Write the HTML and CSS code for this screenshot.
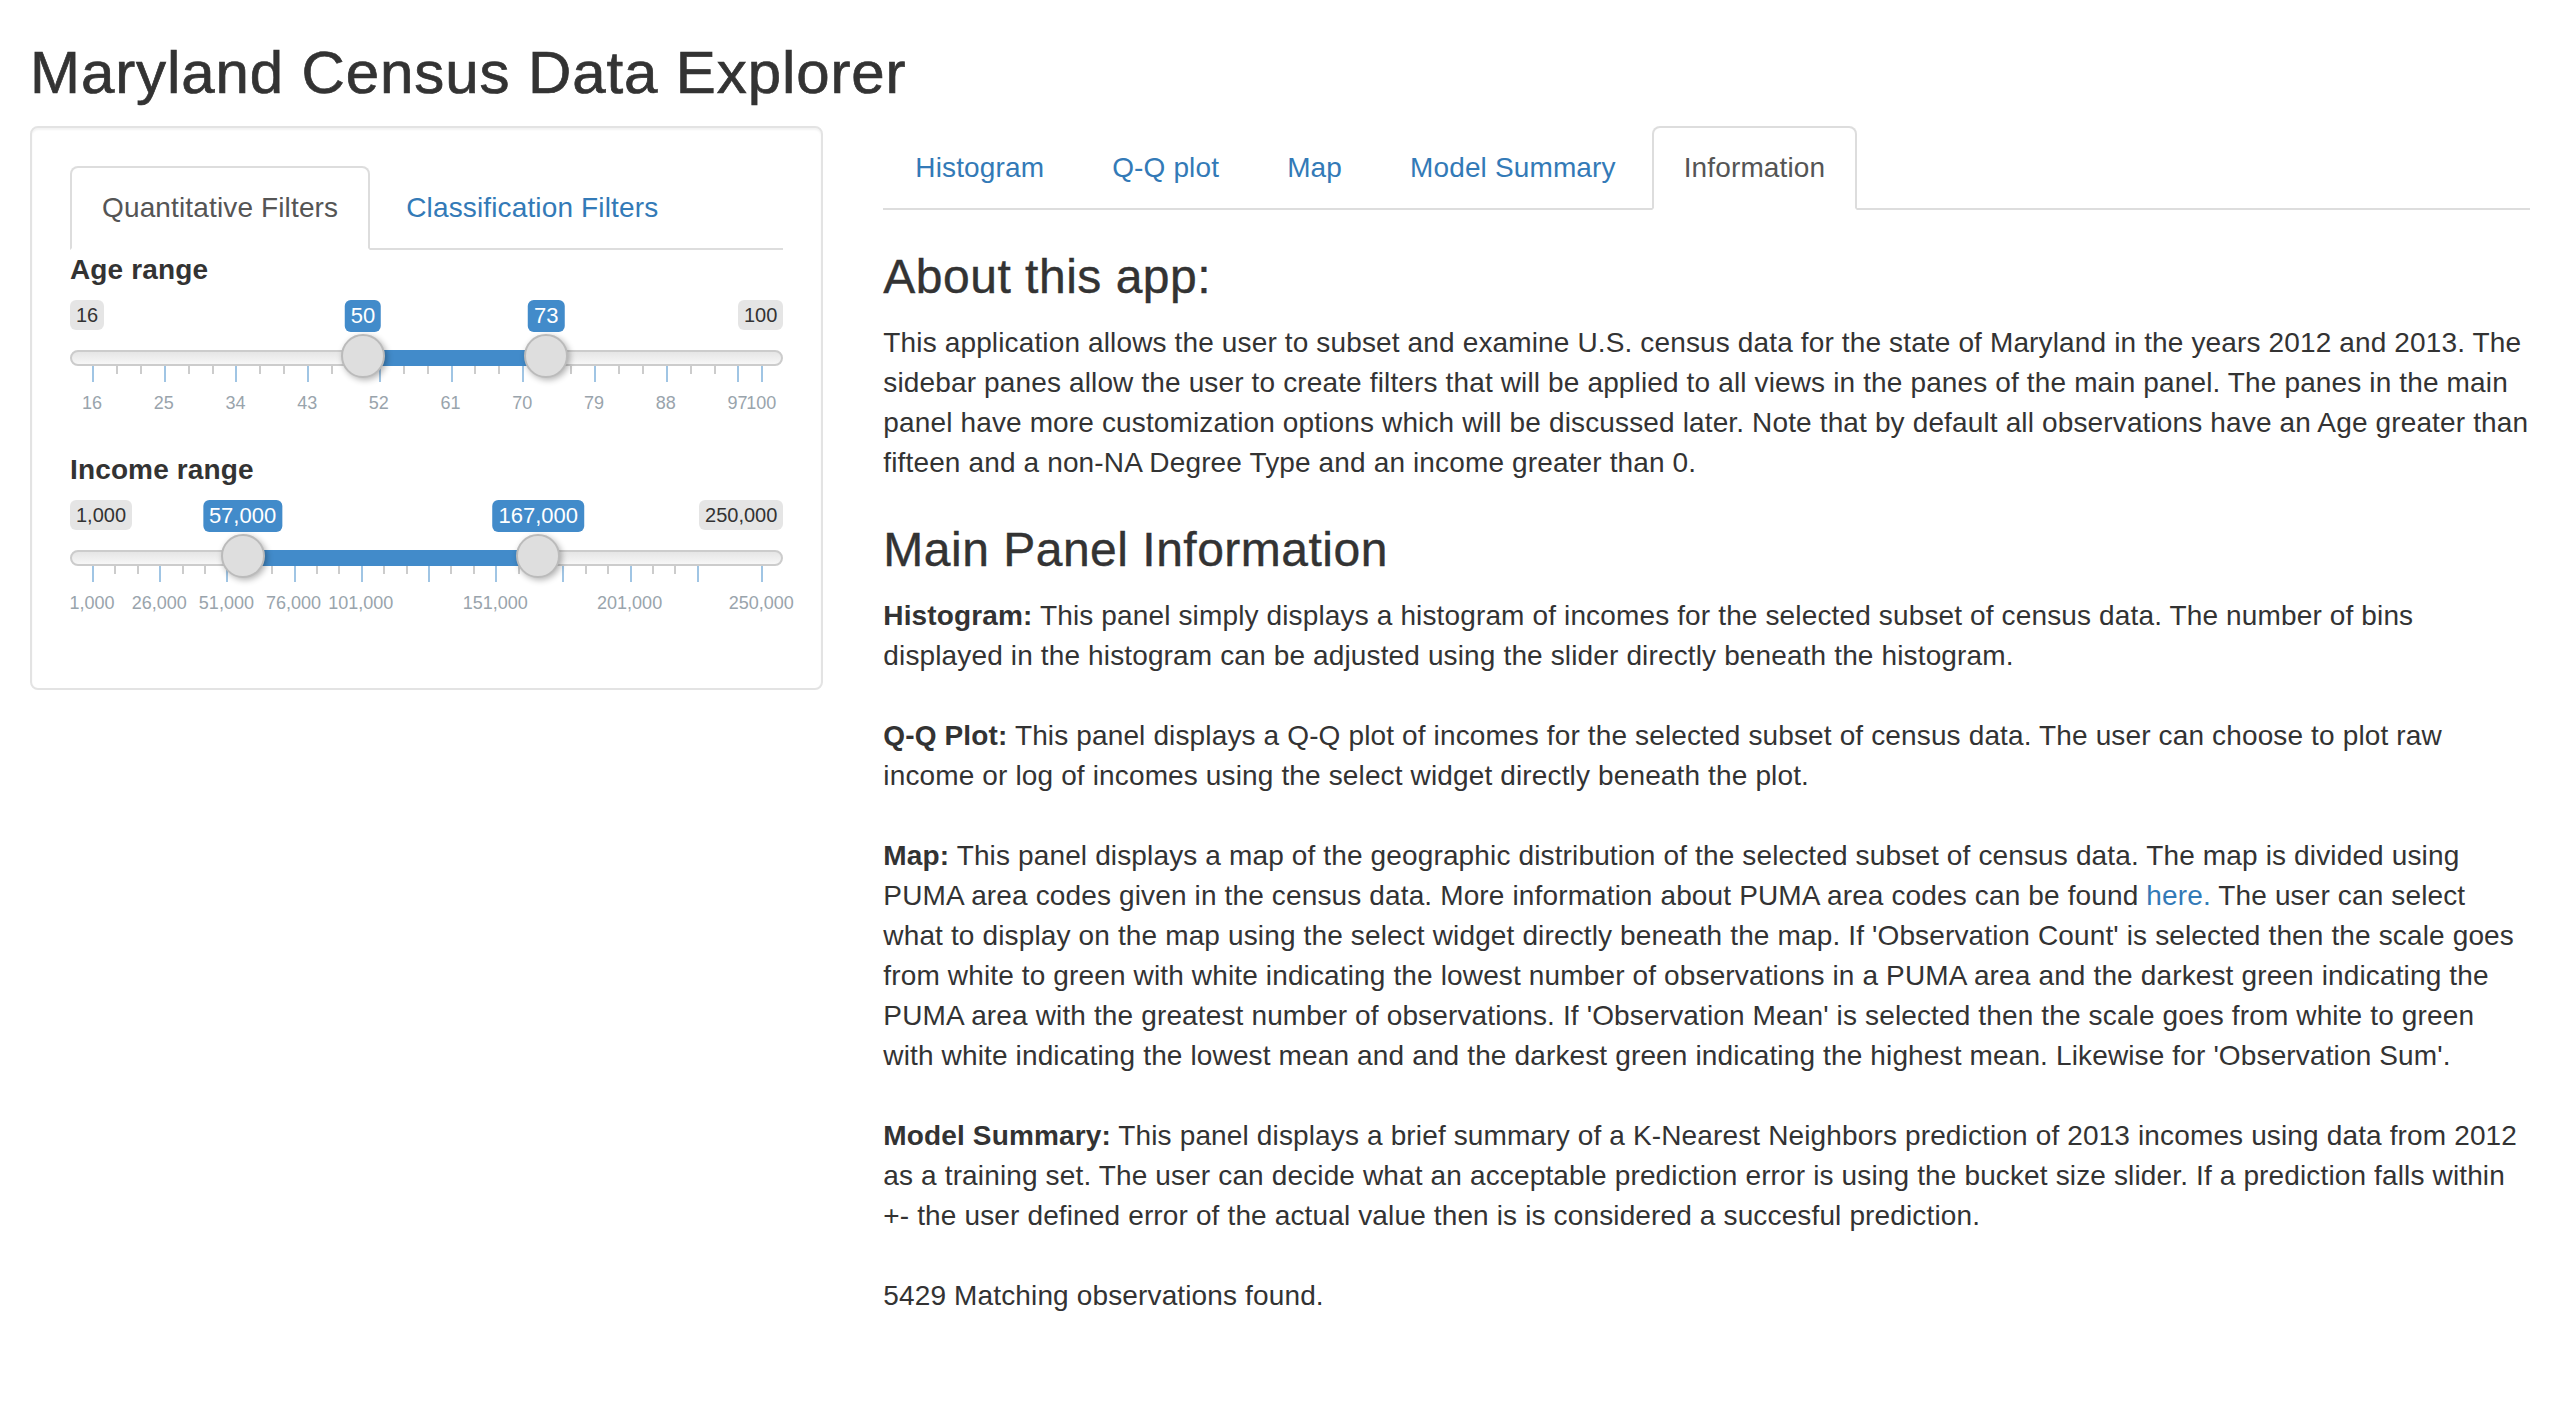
FILE: index.html
```html
<!DOCTYPE html>
<html lang="en">
<head>
<meta charset="utf-8">
<title>Maryland Census Data Explorer</title>
<link rel="stylesheet" href="styles.css">
</head>
<body>
<div class="container">
  <h2 class="title">Maryland Census Data Explorer</h2>
  <div class="row">
    <div class="sidebar">
      <div class="well">
        <ul class="tabs">
          <li class="active"><a>Quantitative Filters</a></li>
          <li><a href="#">Classification Filters</a></li>
        </ul>
        <div class="tab-content">
          <div class="form-group">
            <label class="control-label">Age range</label>
            <div class="irs">
              <div class="irs-grid">
                <span class="pol" style="left:0%"></span>
                <span class="pol small" style="left:3.571%"></span>
                <span class="pol small" style="left:7.143%"></span>
                <span class="pol" style="left:10.714%"></span>
                <span class="pol small" style="left:14.286%"></span>
                <span class="pol small" style="left:17.857%"></span>
                <span class="pol" style="left:21.429%"></span>
                <span class="pol small" style="left:25%"></span>
                <span class="pol small" style="left:28.571%"></span>
                <span class="pol" style="left:32.143%"></span>
                <span class="pol small" style="left:35.714%"></span>
                <span class="pol small" style="left:39.286%"></span>
                <span class="pol" style="left:42.857%"></span>
                <span class="pol small" style="left:46.429%"></span>
                <span class="pol small" style="left:50%"></span>
                <span class="pol" style="left:53.571%"></span>
                <span class="pol small" style="left:57.143%"></span>
                <span class="pol small" style="left:60.714%"></span>
                <span class="pol" style="left:64.286%"></span>
                <span class="pol small" style="left:67.857%"></span>
                <span class="pol small" style="left:71.429%"></span>
                <span class="pol" style="left:75%"></span>
                <span class="pol small" style="left:78.571%"></span>
                <span class="pol small" style="left:82.143%"></span>
                <span class="pol" style="left:85.714%"></span>
                <span class="pol small" style="left:89.286%"></span>
                <span class="pol small" style="left:92.857%"></span>
                <span class="pol" style="left:96.429%"></span>
                <span class="pol" style="left:100%"></span>
                <span class="gt" style="left:0%">16</span>
                <span class="gt" style="left:10.714%">25</span>
                <span class="gt" style="left:21.429%">34</span>
                <span class="gt" style="left:32.143%">43</span>
                <span class="gt" style="left:42.857%">52</span>
                <span class="gt" style="left:53.571%">61</span>
                <span class="gt" style="left:64.286%">70</span>
                <span class="gt" style="left:75%">79</span>
                <span class="gt" style="left:85.714%">88</span>
                <span class="gt" style="left:96.429%">97</span>
                <span class="gt" style="left:100%">100</span>
              </div>
              <span class="irs-line"></span>
              <span class="irs-min">16</span>
              <span class="irs-max">100</span>
              <div class="irs-track">
                <span class="irs-bar" style="left:40.476%;width:27.381%"></span>
                <span class="irs-handle" style="left:40.476%"></span>
                <span class="irs-handle" style="left:67.857%"></span>
                <span class="irs-val" style="left:40.476%">50</span>
                <span class="irs-val" style="left:67.857%">73</span>
              </div>
            </div>
          </div>
          <div class="form-group">
            <label class="control-label">Income range</label>
            <div class="irs">
              <div class="irs-grid">
                <span class="pol" style="left:0%"></span>
                <span class="pol small" style="left:3.347%"></span>
                <span class="pol small" style="left:6.693%"></span>
                <span class="pol" style="left:10.040%"></span>
                <span class="pol small" style="left:13.387%"></span>
                <span class="pol small" style="left:16.734%"></span>
                <span class="pol" style="left:20.080%"></span>
                <span class="pol small" style="left:23.427%"></span>
                <span class="pol small" style="left:26.774%"></span>
                <span class="pol" style="left:30.120%"></span>
                <span class="pol small" style="left:33.467%"></span>
                <span class="pol small" style="left:36.814%"></span>
                <span class="pol" style="left:40.161%"></span>
                <span class="pol small" style="left:43.507%"></span>
                <span class="pol small" style="left:46.854%"></span>
                <span class="pol" style="left:50.201%"></span>
                <span class="pol small" style="left:53.548%"></span>
                <span class="pol small" style="left:56.894%"></span>
                <span class="pol" style="left:60.241%"></span>
                <span class="pol small" style="left:63.588%"></span>
                <span class="pol small" style="left:66.934%"></span>
                <span class="pol" style="left:70.281%"></span>
                <span class="pol small" style="left:73.628%"></span>
                <span class="pol small" style="left:76.975%"></span>
                <span class="pol" style="left:80.321%"></span>
                <span class="pol small" style="left:83.668%"></span>
                <span class="pol small" style="left:87.015%"></span>
                <span class="pol" style="left:90.361%"></span>
                <span class="pol" style="left:100%"></span>
                <span class="gt" style="left:0%">1,000</span>
                <span class="gt" style="left:10.040%">26,000</span>
                <span class="gt" style="left:20.080%">51,000</span>
                <span class="gt" style="left:30.120%">76,000</span>
                <span class="gt" style="left:40.161%">101,000</span>
                <span class="gt" style="left:60.241%">151,000</span>
                <span class="gt" style="left:80.321%">201,000</span>
                <span class="gt" style="left:100%">250,000</span>
              </div>
              <span class="irs-line"></span>
              <span class="irs-min">1,000</span>
              <span class="irs-max">250,000</span>
              <div class="irs-track">
                <span class="irs-bar" style="left:22.490%;width:44.177%"></span>
                <span class="irs-handle" style="left:22.490%"></span>
                <span class="irs-handle" style="left:66.667%"></span>
                <span class="irs-val" style="left:22.490%">57,000</span>
                <span class="irs-val" style="left:66.667%">167,000</span>
              </div>
            </div>
          </div>
        </div>
      </div>
    </div>
    <div class="main">
      <ul class="tabs">
        <li><a href="#">Histogram</a></li>
        <li><a href="#">Q-Q plot</a></li>
        <li><a href="#">Map</a></li>
        <li><a href="#">Model Summary</a></li>
        <li class="active"><a>Information</a></li>
      </ul>
      <div class="tab-content">
        <h3>About this app:</h3>
        <p>This application allows the user to subset and examine U.S. census data for the state of Maryland in the years 2012 and 2013. The sidebar panes allow the user to create filters that will be applied to all views in the panes of the main panel. The panes in the main panel have more customization options which will be discussed later. Note that by default all observations have an Age greater than fifteen and a non-NA Degree Type and an income greater than 0.</p>
        <h3>Main Panel Information</h3>
        <p class="section"><b>Histogram:</b> This panel simply displays a histogram of incomes for the selected subset of census data. The number of bins displayed in the histogram can be adjusted using the slider directly beneath the histogram.</p>
        <p class="section"><b>Q-Q Plot:</b> This panel displays a Q-Q plot of incomes for the selected subset of census data. The user can choose to plot raw income or log of incomes using the select widget directly beneath the plot.</p>
        <p class="section"><b>Map:</b> This panel displays a map of the geographic distribution of the selected subset of census data. The map is divided using PUMA area codes given in the census data. More information about PUMA area codes can be found <a href="#">here.</a> The user can select what to display on the map using the select widget directly beneath the map. If 'Observation Count' is selected then the scale goes from white to green with white indicating the lowest number of observations in a PUMA area and the darkest green indicating the PUMA area with the greatest number of observations. If 'Observation Mean' is selected then the scale goes from white to green with white indicating the lowest mean and and the darkest green indicating the highest mean. Likewise for 'Observation Sum'.</p>
        <p class="section"><b>Model Summary:</b> This panel displays a brief summary of a K-Nearest Neighbors prediction of 2013 incomes using data from 2012 as a training set. The user can decide what an acceptable prediction error is using the bucket size slider. If a prediction falls within +- the user defined error of the actual value then is is considered a succesful prediction.</p>
        <p class="section">5429 Matching observations found.</p>
      </div>
    </div>
  </div>
</div>
</body>
</html>
```

FILE: styles.css
```css
* { box-sizing: border-box; }
html, body { margin: 0; padding: 0; background: #fff; }
body {
  font-family: "Liberation Sans", Arial, Helvetica, sans-serif;
  font-size: 28px;
  line-height: 40px;
  letter-spacing: 0.14px;
  color: #333;
}
a { color: #337ab7; text-decoration: none; }

.container { padding: 0 30px; }
.title {
  font-size: 60px;
  font-weight: 500;
  line-height: 66px;
  letter-spacing: 0.9px;
  -webkit-text-stroke: 0.7px #333;
  margin: 40px 0 20px;
  color: #333;
}
.row { display: flex; margin: 0 -30px; }
.sidebar { width: 33.3333%; padding: 0 30px; }
.main { width: 66.6667%; padding: 0 30px; }

.well {
  border: 2px solid #e3e3e3;
  border-radius: 8px;
  padding: 38px;
  background: #fff;
  box-shadow: inset 0 2px 2px rgba(0,0,0,.05);
}

.tabs {
  display: flex;
  list-style: none;
  margin: 0;
  padding: 0;
  border-bottom: 2px solid #ddd;
}
.tabs li { margin-bottom: -2px; }
.tabs a {
  display: block;
  padding: 20px 30px;
  line-height: 40px;
  margin-right: 4px;
  border: 2px solid transparent;
  border-radius: 8px 8px 0 0;
  color: #337ab7;
}
.tabs li.active a {
  color: #555;
  background: #fff;
  border-color: #ddd #ddd transparent;
}

.form-group { margin-bottom: 30px; }
.control-label {
  display: inline-block;
  font-weight: bold;
  margin-bottom: 10px;
}

/* range slider */
.irs {
  position: relative;
  height: 120px;
  letter-spacing: 0;
  font-family: "Liberation Sans", Arial, Helvetica, sans-serif;
}
.irs-line {
  position: absolute;
  left: 0;
  right: 0;
  top: 50px;
  height: 16px;
  border: 2px solid #ccc;
  border-radius: 32px;
  background: linear-gradient(to bottom, #ddd -50%, #fff 150%);
}
.irs-min, .irs-max {
  position: absolute;
  top: 0;
  font-size: 20px;
  line-height: 26px;
  padding: 2px 6px;
  color: #333;
  background: rgba(0,0,0,0.1);
  border-radius: 6px;
}
.irs-min { left: 0; }
.irs-max { right: 0; }
.irs-track {
  position: absolute;
  left: 22px;
  right: 22px;
  top: 0;
  bottom: 0;
}
.irs-bar {
  position: absolute;
  top: 50px;
  height: 16px;
  background: #428bca;
}
.irs-handle {
  position: absolute;
  top: 34px;
  width: 44px;
  height: 44px;
  margin-left: -22px;
  background: #dedede;
  border: 2px solid #bbb;
  border-radius: 50%;
  box-shadow: 2px 2px 6px rgba(0,0,0,0.3);
}
.irs-val {
  position: absolute;
  top: 0;
  transform: translateX(-50%);
  font-size: 22px;
  line-height: 28px;
  padding: 2px 6px;
  color: #fff;
  background: #428bca;
  border-radius: 6px;
  white-space: nowrap;
}
.irs-grid {
  position: absolute;
  left: 22px;
  right: 22px;
  top: 66px;
  height: 54px;
}
.pol {
  position: absolute;
  top: 0;
  width: 2px;
  height: 16px;
  background: #428bca;
  opacity: 0.5;
}
.pol.small { height: 8px; background: #999; }
.gt {
  position: absolute;
  bottom: 8px;
  transform: translateX(-50%);
  font-size: 18px;
  line-height: 18px;
  padding: 0 3px;
  color: #99a4ac;
  white-space: nowrap;
}

/* main content */
.tab-content h3 {
  font-size: 48px;
  font-weight: 500;
  line-height: 53px;
  letter-spacing: 0.5px;
  -webkit-text-stroke: 0.4px #333;
  margin: 40px 0 20px;
}
.tab-content p { margin: 0 0 20px; }
.tab-content p.section { margin: 0 0 40px; }
b { font-weight: bold; }
```
